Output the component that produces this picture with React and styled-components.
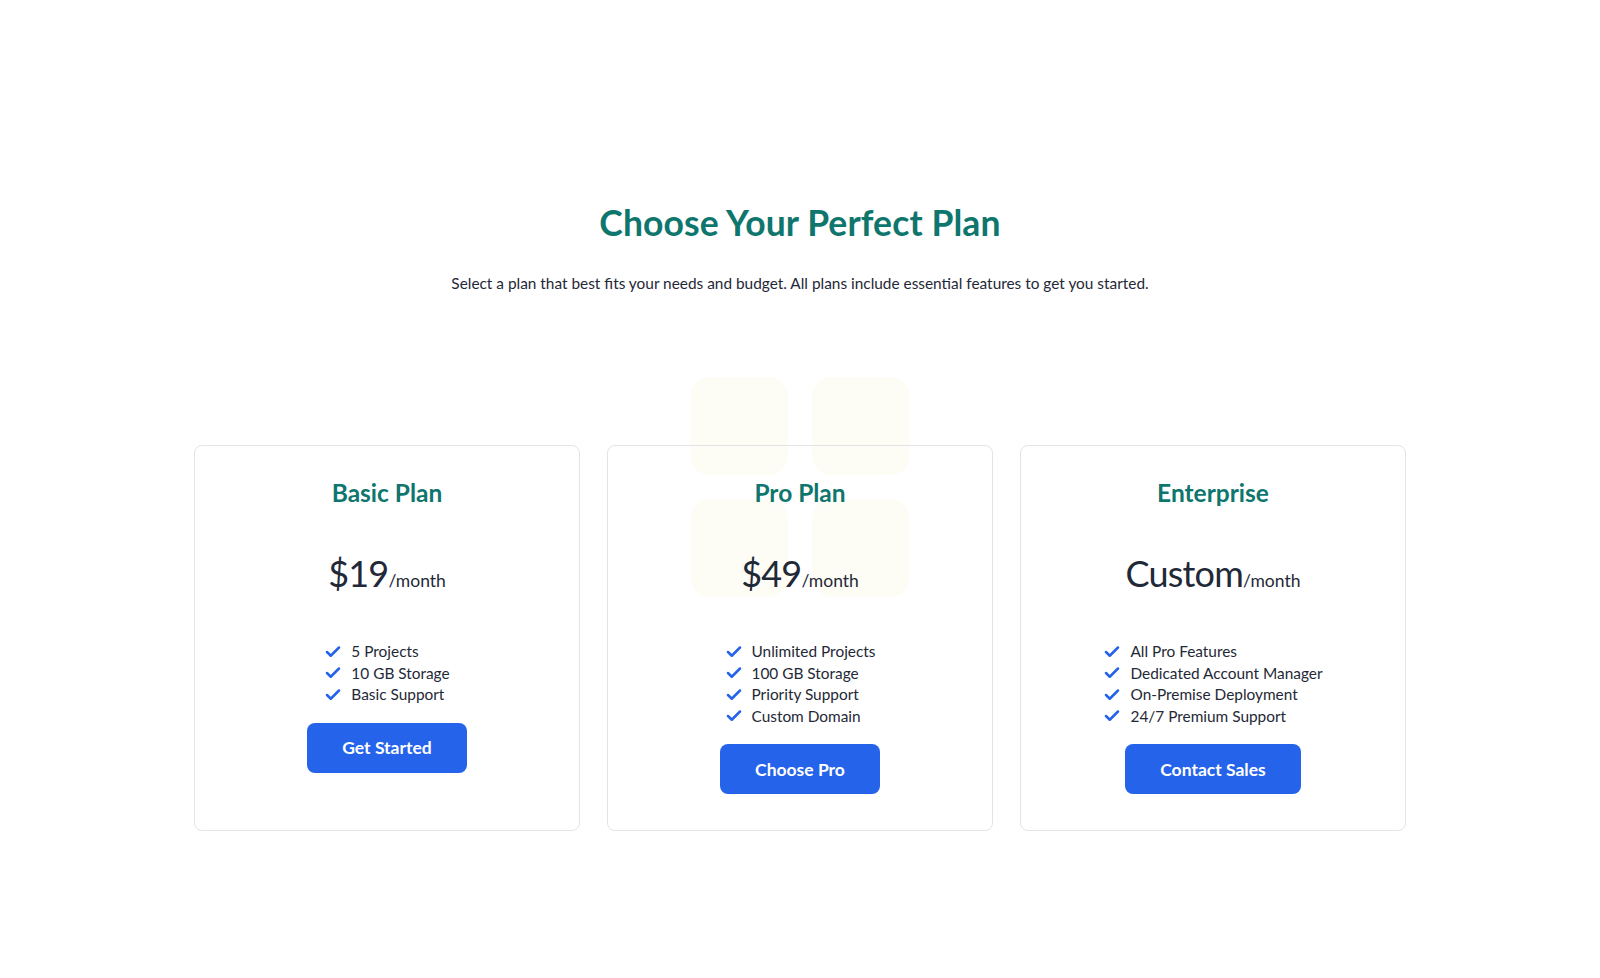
import React from 'react';
import styled, { createGlobalStyle } from 'styled-components';
import { Check } from 'lucide-react';

const plans = [
  {
    name: 'Basic Plan',
    price: '$19',
    features: ['5 Projects', '10 GB Storage', 'Basic Support'],
    cta: 'Get Started',
  },
  {
    name: 'Pro Plan',
    price: '$49',
    features: ['Unlimited Projects', '100 GB Storage', 'Priority Support', 'Custom Domain'],
    cta: 'Choose Pro',
  },
  {
    name: 'Enterprise',
    price: 'Custom',
    features: ['All Pro Features', 'Dedicated Account Manager', 'On-Premise Deployment', '24/7 Premium Support'],
    cta: 'Contact Sales',
  },
];

const App = () => {
  return (
    <>
      <GlobalStyle />
      <Page>
        <Header>
          <Title>Choose Your Perfect Plan</Title>
          <Subtitle>
            Select a plan that best fits your needs and budget. All plans include essential features to get you started.
          </Subtitle>
        </Header>
        <Stage>
          <Decor aria-hidden="true">
            <Tile />
            <Tile />
            <Tile />
            <Tile />
          </Decor>
          <Cards>
            {plans.map((plan) => (
              <Card key={plan.name}>
                <PlanName>{plan.name}</PlanName>
                <Price>
                  {plan.price}
                  <Period>/month</Period>
                </Price>
                <Features>
                  {plan.features.map((f) => (
                    <Feature key={f}>
                      <Check size={18} strokeWidth={3.4} color="#2563eb" />
                      {f}
                    </Feature>
                  ))}
                </Features>
                <Button>{plan.cta}</Button>
              </Card>
            ))}
          </Cards>
        </Stage>
      </Page>
    </>
  );
};

const GlobalStyle = createGlobalStyle`
  body {
    margin: 0;
    background: #ffffff;
    font-family: Lato, "Noto Sans", sans-serif;
    color: #1f2937;
  }
`;

const Page = styled.main`
  padding-top: 201px;
  padding-bottom: 140px;
  display: flex;
  flex-direction: column;
  align-items: center;
`;

const Header = styled.header`
  text-align: center;
`;

const Title = styled.h1`
  margin: 0;
  font-size: 35.5px;
  line-height: 43px;
  font-weight: 700;
  color: #0f766e;
  letter-spacing: 0.1px;
`;

const Subtitle = styled.p`
  margin: 27px 0 0;
  font-size: 15.4px;
  line-height: 24px;
  color: #1f2937;
`;

const Stage = styled.section`
  position: relative;
  margin-top: 150px;
`;

const Decor = styled.div`
  position: absolute;
  top: -68px;
  left: 50%;
  transform: translateX(-50%);
  display: grid;
  grid-template-columns: repeat(2, 98px);
  gap: 24px;
  z-index: 0;
`;

const Tile = styled.div`
  width: 98px;
  height: 98px;
  border-radius: 20px;
  background: #fdfcf5;
`;

const Cards = styled.div`
  position: relative;
  z-index: 1;
  display: grid;
  grid-template-columns: repeat(3, 386px);
  gap: 27px;
`;

const Card = styled.article`
  box-sizing: border-box;
  height: 386px;
  border: 1px solid #e2e4e8;
  border-radius: 8px;
  padding-top: 31px;
  display: flex;
  flex-direction: column;
  align-items: center;
`;

const PlanName = styled.h2`
  margin: 0;
  font-size: 24.5px;
  line-height: 32px;
  font-weight: 700;
  color: #0f766e;
`;

const Price = styled.div`
  margin-top: 43px;
  font-size: 36px;
  line-height: 43px;
  font-weight: 400;
  color: #1f2937;
  letter-spacing: -0.8px;
`;

const Period = styled.span`
  font-size: 17.5px;
  letter-spacing: 0;
`;

const Features = styled.ul`
  list-style: none;
  margin: 39px 0 0;
  padding: 0;
`;

const Feature = styled.li`
  display: flex;
  align-items: center;
  gap: 9px;
  font-size: 15.4px;
  line-height: 21.5px;
  color: #1f2937;
`;

const Button = styled.button`
  margin-top: 17px;
  border: none;
  border-radius: 8px;
  background: #2563eb;
  color: #ffffff;
  font-family: inherit;
  font-size: 17.5px;
  font-weight: 700;
  height: 50px;
  padding: 0 35px;
  cursor: pointer;
`;

export default App;
